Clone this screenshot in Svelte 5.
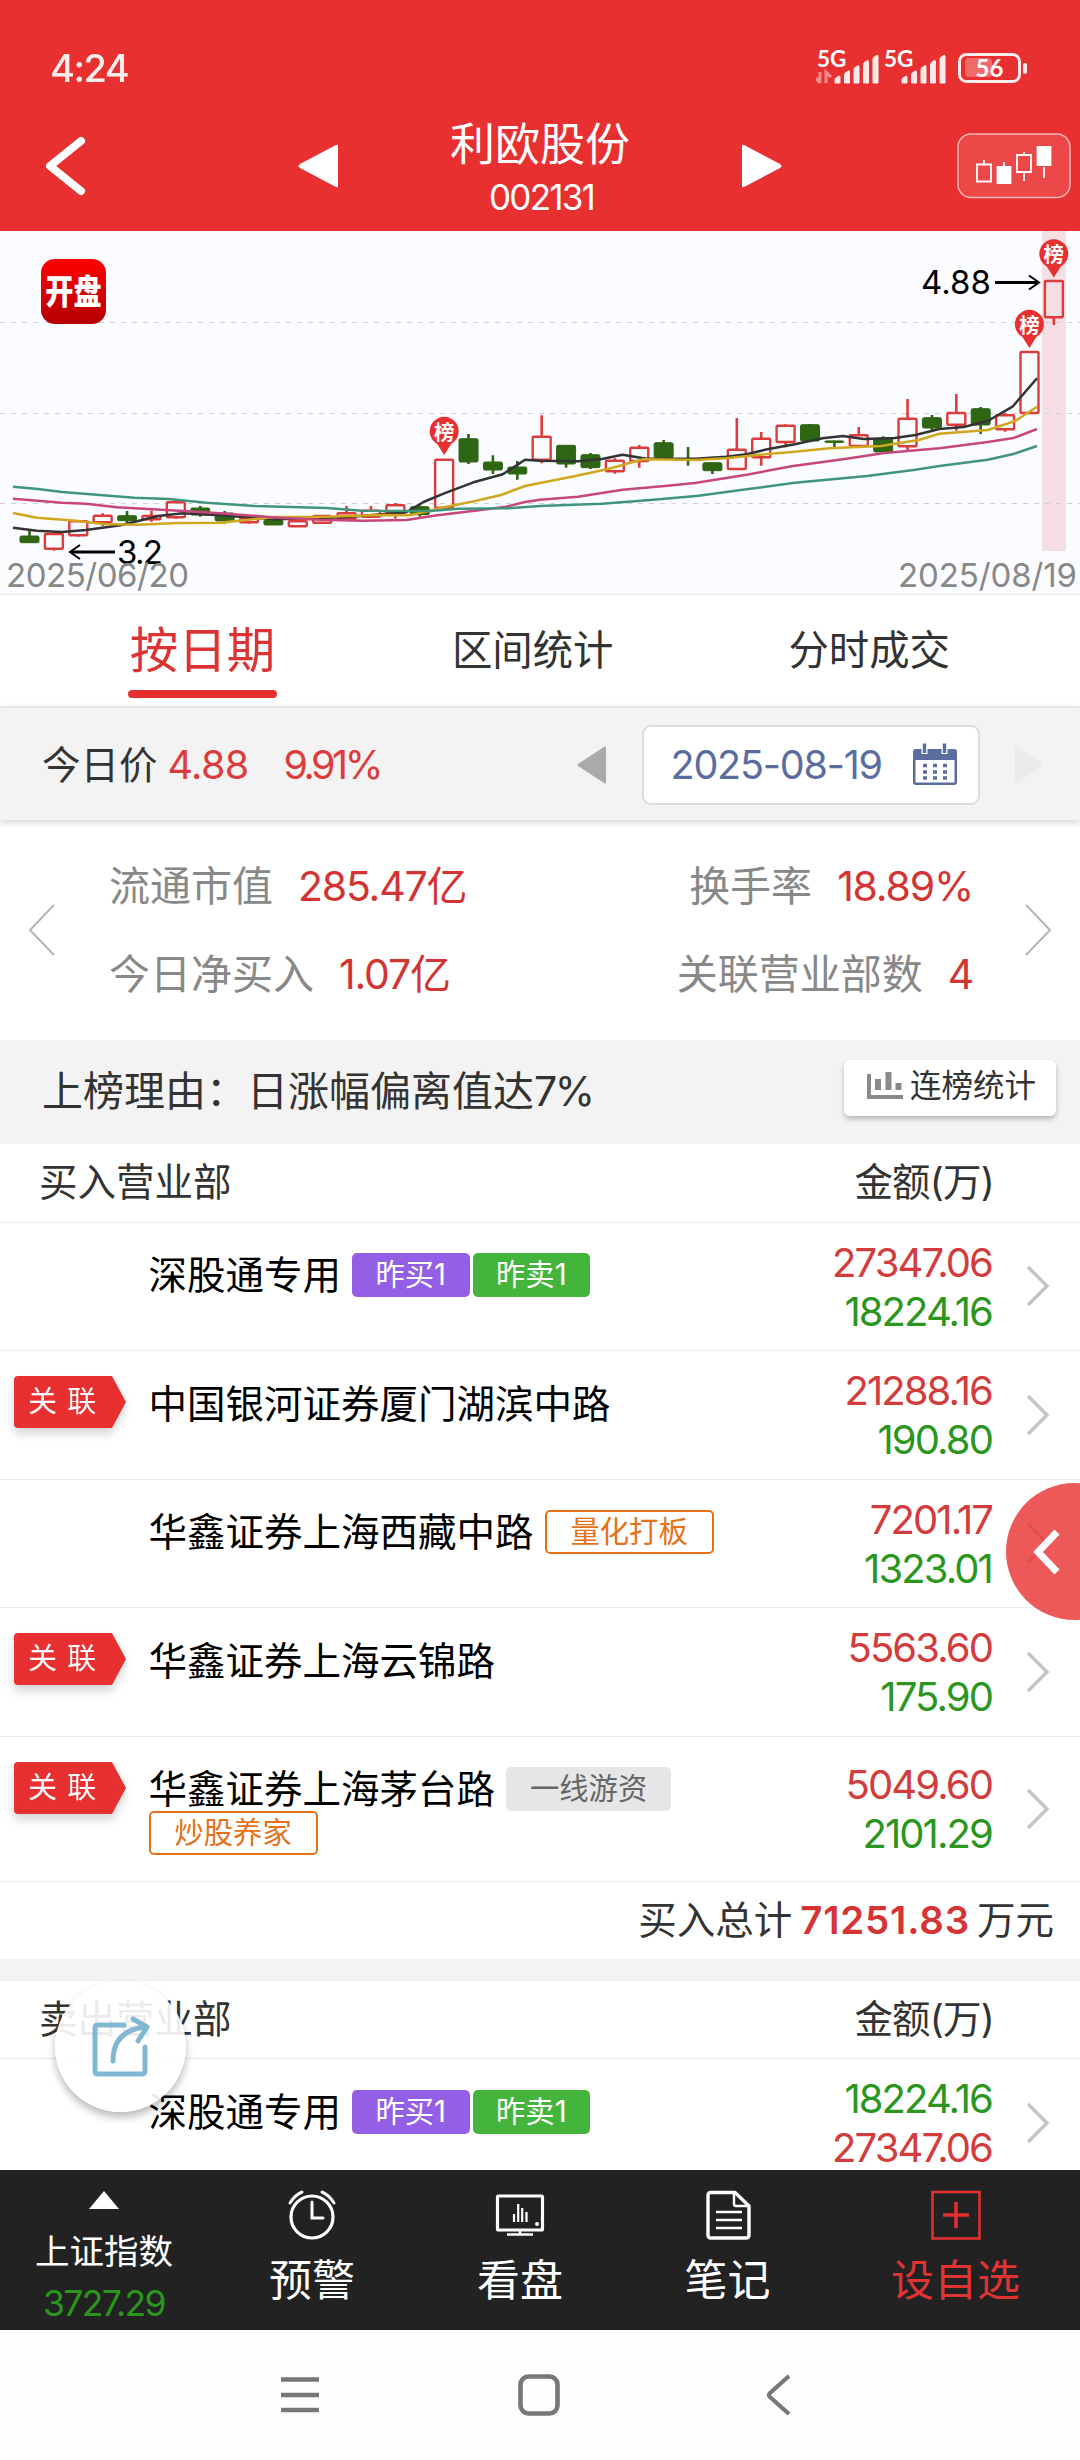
<script lang="ts">
	type Tag = { text: string; kind: string };
	type Seat = { name: string; linked?: boolean; tags?: Tag[]; amounts: [string, string]; sell?: boolean };

	const tabs = ['按日期', '区间统计', '分时成交'];
	let activeTab = $state(0);

	const yesterday: Tag[] = [
		{ text: '昨买1', kind: 'purple' },
		{ text: '昨卖1', kind: 'green' }
	];

	const buyers: Seat[] = [
		{ name: '深股通专用', tags: yesterday, amounts: ['27347.06', '18224.16'] },
		{ name: '中国银河证券厦门湖滨中路', linked: true, amounts: ['21288.16', '190.80'] },
		{ name: '华鑫证券上海西藏中路', tags: [{ text: '量化打板', kind: 'orange' }], amounts: ['7201.17', '1323.01'] },
		{ name: '华鑫证券上海云锦路', linked: true, amounts: ['5563.60', '175.90'] },
		{
			name: '华鑫证券上海茅台路',
			linked: true,
			tags: [{ text: '一线游资', kind: 'gray' }, { text: '炒股养家', kind: 'orange' }],
			amounts: ['5049.60', '2101.29']
		}
	];

	const sellers: Seat[] = [
		{ name: '深股通专用', tags: yesterday, amounts: ['18224.16', '27347.06'], sell: true }
	];

	// [up, bodyTop, bodyBottom, high, low]
	const candles = [
		[0, 305, 311.7, 299, 311.7], [1, 303, 317.7, 300.7, 319.7], [1, 290.3, 304.3, 289, 305.7],
		[1, 284.7, 291.3, 282.3, 295], [0, 284.7, 289.7, 280, 292.3], [1, 285, 288.3, 279.7, 290.7],
		[1, 271.3, 286.3, 269.3, 287.7], [0, 277, 284, 275, 285.7], [0, 282, 290, 280, 292.7],
		[1, 287.7, 291.3, 285.7, 292.7], [0, 288.7, 294, 288.7, 294], [1, 290.3, 295.3, 290.3, 295.3],
		[1, 285, 291.7, 285, 291.7], [1, 282.3, 288.3, 275, 288.3], [1, 279.7, 285.7, 275, 285.7],
		[1, 274.3, 282, 272, 287.7], [0, 275.7, 283.7, 274.3, 285.7], [1, 228.7, 276.7, 228.7, 276.7],
		[0, 207.7, 231, 203, 233], [0, 231, 239, 224.3, 243], [0, 236, 243, 230, 248.7],
		[1, 205.7, 228.7, 184.3, 232.3], [0, 214.3, 233, 214.3, 236.7], [0, 223.7, 236.7, 222, 238],
		[1, 229.7, 240.3, 227.3, 242.7], [1, 216.7, 230, 214, 236.7], [0, 211.7, 226.7, 209, 226.7],
		[0, 228, 229.5, 216, 234.7], [0, 231.7, 239.7, 231.7, 243], [1, 218.7, 238, 187, 238],
		[1, 207.7, 226.3, 201, 234.7], [1, 194.7, 211, 193.3, 216.3], [0, 193.7, 210, 193, 210],
		[0, 209.9, 211.4, 209.7, 217], [1, 204.3, 215, 196, 215], [0, 207.3, 221, 205.3, 221],
		[1, 187.7, 215.3, 168, 219], [0, 186.7, 197, 184, 199], [1, 182, 193.7, 163, 199.7],
		[0, 177.7, 194, 176, 203], [1, 184.3, 198.3, 182, 200.7], [1, 121, 182, 121, 182],
		[1, 50, 86.3, 50, 94]
	].map(([up, top, bottom, high, low], i) => ({ up, top, bottom, high, low, x: 29.5 + i * 24.39 }));

	const averages = [
		{ color: '#333', points: '13,296.7 37,299.7 62,301 86,299 120.5,294.3 158.4,285 182.5,282.3 220.4,284.3 275.5,288.3 344.4,286.3 406.3,281.3 423.5,271 444.2,262.3 473.5,251.3 502.8,243.3 525,228.7 540,229.7 577.9,230.3 602,228 622.6,223.7 646.7,227.7 695,227.7 726,225.7 746.6,223.3 767.3,218.3 794.8,213.3 822.4,207.3 843,205 863.7,208 894.7,207 915.4,204 939.4,198 963.6,196 987.7,190 1012.5,175.7 1037,147.3' },
		{ color: '#d0a820', points: '13,282 37,286.7 75.8,289.7 103.3,293 137.7,293.7 179,292 220.4,291.7 248,288.7 275.5,286 327,285.7 378.8,284 409.8,284.3 444.2,276.3 475.2,270 501,264 525,255 540,252 574.4,245.3 608.9,237.7 643.3,228.3 695,229 726,227.3 760.4,223.7 794.8,220.7 829.3,217.3 880.9,215 918.8,209 939.4,202.7 987.7,199 1015.2,190 1037,175.7' },
		{ color: '#c8467e', points: '13,267.7 62,271.7 86,272.7 117,276.3 179,279.7 220.4,282.3 279,286.7 320.2,288.7 361.6,289.7 406.3,289 437.3,284.3 478.7,279.3 506.2,275.7 525,271 540,268.7 577.9,265.7 622.6,258.7 667.4,254.7 695,252 746.6,243.7 791.4,235.3 843,228.3 884.4,222 939.4,217.3 987.7,211 1013.5,207 1037,198' },
		{ color: '#40957a', points: '13,255.7 38,258 62,261 134.3,266.7 168.7,268 206.6,271.7 254.8,275 327,277 361.6,279.7 430,280 458,277.7 506.2,277.3 540,275 602,272.7 653.6,268.7 698.4,264.7 746.6,258.3 794.8,251.7 867,245 915.4,238.7 939.4,235 987.7,228.7 1013.5,223 1037,215' }
	];

	const pins = [[444.2, 202], [1029.4, 95], [1053.8, 24.5]];
	const bars = [0, 1, 2, 3, 4];
</script>

{#snippet signal(data: boolean)}
	<svg class="signal" width="64" height="43" viewBox="0 -7 64 43">
		<text x="1" y="17" class="net">5G</text>
		{#if data}
			<path d="M4 22v11M4 33l-4-5M10 33V22l5 5" fill="none" stroke="#f58f8f" stroke-width="3" />
		{/if}
		{#each bars as i}
			<path d="M{19 + i * 9.5} 33v{-3 - i * 5.2}q0-1 1-2l3-2q1 0 1 1v{6 + i * 5.2}z" fill="#fff" stroke="#fff" opacity=".9" />
		{/each}
	</svg>
{/snippet}

{#snippet seatRow(seat: Seat)}
	<div class="seat">
		<div class="flag">
			{#if seat.linked}
				<div class="linked">
					<svg width="112" height="52" viewBox="0 0 112 52">
						<path d="M4 0H98L112 26L98 52H4Q0 52 0 48V4Q0 0 4 0Z" fill="#e83030" />
					</svg>
					<span>关 联</span>
				</div>
			{/if}
		</div>
		<div class="who">
			<span class="name">{seat.name}</span>
			{#each seat.tags ?? [] as tag}
				<span class="tag {tag.kind}">{tag.text}</span>
			{/each}
		</div>
		<div class="amounts" class:sell={seat.sell}>
			<span>{seat.amounts[0]}</span>
			<span>{seat.amounts[1]}</span>
		</div>
		<svg class="go" width="26" height="44" viewBox="0 0 26 44">
			<path d="M3 3L22 22L3 41" fill="none" stroke="#c4c4c4" stroke-width="3.4" />
		</svg>
	</div>
{/snippet}

<div class="screen">
	<header>
		<div class="status">
			<span class="time">4:24</span>
			<div class="status-icons">
				{@render signal(true)}
				{@render signal(false)}
				<svg class="battery" width="72" height="32" viewBox="0 0 72 32">
					<rect x="1.5" y="1.5" width="60" height="27" rx="7" fill="none" stroke="#fff" stroke-width="3" opacity=".9" />
					<rect x="7" y="5" width="27" height="19" rx="4" fill="#f06a6a" />
					<rect x="65" y="10" width="4" height="11" rx="2" fill="#fff" opacity=".9" />
					<text x="31.5" y="23.5" text-anchor="middle">56</text>
				</svg>
			</div>
		</div>
		<div class="titlebar">
			<svg class="back" width="44" height="62" viewBox="0 0 44 62">
				<path d="M37 6L6 31L37 56" fill="none" stroke="#fff" stroke-width="8" stroke-linecap="round" stroke-linejoin="round" />
			</svg>
			<div class="stock">
				<svg width="42" height="46" viewBox="0 0 42 46">
					<path d="M39 2Q41 1 41 3V43Q41 45 39 44L3 25Q0 23 3 21Z" fill="#fff" />
				</svg>
				<div class="stock-name">
					<h1>利欧股份</h1>
					<span>002131</span>
				</div>
				<svg width="42" height="46" viewBox="0 0 42 46">
					<path d="M3 2Q1 1 1 3V43Q1 45 3 44L39 25Q42 23 39 21Z" fill="#fff" />
				</svg>
			</div>
			<svg class="kline" width="114" height="66" viewBox="0 0 114 66">
				<rect x="1" y="1" width="112" height="63.5" rx="13" fill="#ed4848" stroke="#f8b4b4" stroke-width="1.5" />
				<g stroke="#fff" stroke-width="1.8" fill="none">
					<path d="M27 27v4M20 31.5h14v17H20zM47 29v4M67 19v3M60 22h14v17H60zM67 39v9M87 34v11" />
					<path d="M40.5 34h13v16h-13zM80.5 14h13v18h-13z" fill="#fff" />
				</g>
			</svg>
		</div>
	</header>

	<div class="chart">
		<svg width="1080" height="363" viewBox="0 0 1080 363">
			<defs>
				<linearGradient id="logo" x1="0" y1="0" x2="0" y2="1">
					<stop offset="0" stop-color="#ff0202" />
					<stop offset="1" stop-color="#b40000" />
				</linearGradient>
			</defs>
			<rect x="1042" width="24" height="320" fill="#f6dfe4" />
			{#each [91.5, 182.5, 272.5] as y}
				<path d="M0 {y}H1080" stroke="#cfcfd6" stroke-width="1" stroke-dasharray="5 6" />
			{/each}
			{#each candles as c}
				{#if c.up}
					<path d="M{c.x} {c.high}V{c.top}M{c.x} {c.bottom}V{c.low}" stroke="#dc3c3c" stroke-width="2.6" />
					<rect x={c.x - 9} y={c.top} width="18" height={c.bottom - c.top} rx="1" fill="none" stroke="#dc3c3c" stroke-width="2.4" />
				{:else}
					<path d="M{c.x} {c.high}V{c.low}" stroke="#2e6614" stroke-width="2.6" />
					<rect x={c.x - 9.5} y={c.top} width="19" height={c.bottom - c.top} rx="1.5" fill="#2e6614" stroke="#2e6614" stroke-width="1" />
				{/if}
			{/each}
			{#each averages as line}
				<polyline points={line.points} fill="none" stroke={line.color} stroke-width="2.5" stroke-linejoin="round" />
			{/each}
			{#each pins as [x, y]}
				<path d="M{x} {y + 22}L{x - 7} {y + 11}A14.5 14.5 0 1 1 {x + 7} {y + 11}Z" fill="#e83030" />
				<text {x} y={y + 6.5} class="pin">榜</text>
			{/each}
			<rect x="41" y="28" width="65" height="65" rx="14" fill="url(#logo)" />
			<text transform="translate(73.5 73) scale(.94 1.15)" class="logo">开盘</text>
			<g stroke="#000" fill="none">
				<path d="M72 321H115M995 51.5H1037" stroke-width="3" />
				<path d="M80 314L70 321L80 328M1029 44.5L1039 51.5L1029 58.5" stroke-width="2" />
			</g>
			<text x="117" y="333" class="mark" textLength="46">3.2</text>
			<text x="921" y="63" class="mark" textLength="70">4.88</text>
			<text x="6" y="355.5" class="day" textLength="183">2025/06/20</text>
			<text x="898" y="355.5" class="day" textLength="179">2025/08/19</text>
		</svg>
	</div>

	<nav class="tabs">
		{#each tabs as tab, i}
			<button class:active={activeTab === i} onclick={() => (activeTab = i)}>{tab}</button>
		{/each}
	</nav>

	<div class="datebar">
		<span class="today">今日价</span>
		<span class="price">4.88</span>
		<span class="change">9.91%</span>
		<svg class="prev" width="30" height="38" viewBox="0 0 30 38">
			<path d="M29 1V37Q29 38 27 37L1 20Q0 19 1 18L27 1Q29 0 29 1Z" fill="#aaa" />
		</svg>
		<div class="picker">
			<span>2025-08-19</span>
			<svg width="46" height="44" viewBox="0 0 46 44">
				<path d="M4 6H42Q45 6 45 9V39Q45 42 42 42H4Q1 42 1 39V9Q1 6 4 6Z" fill="#5a6d9e" />
				<rect x="3.5" y="17" width="39" height="22.5" fill="#fff" />
				<path d="M12.5 0V11M32.5 0V11" stroke="#fff" stroke-width="6" />
				<path d="M12.5 0.5V10M32.5 0.5V10" stroke="#5a6d9e" stroke-width="3.4" />
				<path d="M11 22.5H15M21 22.5H25M31 22.5H35M11 29H15M21 29H25M31 29H35M11 35H15M21 35H25M31 35H35" stroke="#5a6d9e" stroke-width="3.5" />
			</svg>
		</div>
		<svg class="next" width="30" height="38" viewBox="0 0 30 38">
			<path d="M1 1V37Q1 38 3 37L29 20Q30 19 29 18L3 1Q1 0 1 1Z" fill="#ebebeb" />
		</svg>
	</div>

	<div class="stats">
		<svg width="28" height="54" viewBox="0 0 28 54">
			<path d="M26 2L2 27L26 52" fill="none" stroke="#b5b5b5" stroke-width="2" />
		</svg>
		<div class="figures">
			<div><span>流通市值</span><strong>285.47亿</strong></div>
			<div class="end"><span>换手率</span><strong>18.89%</strong></div>
			<div><span>今日净买入</span><strong>1.07亿</strong></div>
			<div class="end"><span>关联营业部数</span><strong>4</strong></div>
		</div>
		<svg width="28" height="54" viewBox="0 0 28 54">
			<path d="M2 2L26 27L2 52" fill="none" stroke="#b5b5b5" stroke-width="2" />
		</svg>
	</div>

	<div class="reason">
		<span>上榜理由：日涨幅偏离值达<i>7%</i></span>
		<button>
			<svg width="36" height="27" viewBox="0 0 36 27">
				<path d="M2 2V25H36" fill="none" stroke="#8a8a8a" stroke-width="4" />
				<path d="M11 7V18M21.5 0V18M31.5 11V18" stroke="#8a8a8a" stroke-width="6" />
			</svg>
			连榜统计
		</button>
	</div>

	<section>
		<div class="head"><span>买入营业部</span><span class="unit">金额(万)</span></div>
		{#each buyers as seat}
			{@render seatRow(seat)}
		{/each}
		<div class="total">买入总计<b>71251.83</b>万元</div>
	</section>

	<section class="sells">
		<div class="head"><span>卖出营业部</span><span class="unit">金额(万)</span></div>
		{#each sellers as seat}
			{@render seatRow(seat)}
		{/each}
	</section>

	<div class="drawer">
		<svg width="30" height="46" viewBox="0 0 30 46">
			<path d="M25 3L6 23L25 43" fill="none" stroke="#fff" stroke-width="7" />
		</svg>
	</div>

	<div class="share">
		<svg width="60" height="64" viewBox="0 0 60 64">
			<g fill="none" stroke="#82b7d4" stroke-width="5" stroke-linecap="round" stroke-linejoin="round">
				<path d="M33 10H7Q4 10 4 13V56Q4 59 7 59H50Q54 59 54 56V32" />
				<path d="M22 46Q22 15 55 12M42 4L56 12L47 26" />
			</g>
		</svg>
	</div>

	<footer>
		<div class="index">
			<svg width="30" height="18" viewBox="0 0 30 18"><path d="M15 0L30 18H0Z" fill="#fff" /></svg>
			<span>上证指数</span>
			<em>3727.29</em>
		</div>
		<div class="item">
			<svg width="50" height="50" viewBox="0 0 50 50" fill="none" stroke="#fff" stroke-width="3.2" stroke-linecap="round">
				<circle cx="25" cy="27" r="21" />
				<path d="M25 12V28H36M3 13Q8 5 15 2M47 13Q42 5 35 2" stroke-width="3" />
			</svg>
			<span>预警</span>
		</div>
		<div class="item">
			<svg width="50" height="50" viewBox="0 0 50 50" fill="none" stroke="#fff" stroke-width="3.2">
				<rect x="2.5" y="6" width="45" height="34" rx="1" />
				<path d="M25 40V44M12 44.5H38" stroke-width="2.6" />
				<path d="M19 24V32M23.2 14V32M27.2 18V32M31.5 22V32" stroke-width="2.2" />
				<circle cx="42" cy="34" r="2" fill="#fff" stroke="none" />
			</svg>
			<span>看盘</span>
		</div>
		<div class="item">
			<svg width="50" height="50" viewBox="0 0 50 50" fill="none" stroke="#fff" stroke-width="3.4" stroke-linejoin="round">
				<path d="M32 2.5H8Q5 2.5 5 5.5V45Q5 48 8 48H43Q46 48 46 45V16Z" />
				<path d="M31 3V14Q31 16 33 16H45M13 22H39M13 30H39M13 38H39" stroke-width="2.4" />
			</svg>
			<span>笔记</span>
		</div>
		<div class="item red">
			<svg width="50" height="50" viewBox="0 0 50 50" fill="none" stroke="#e23030">
				<rect x="1.5" y="2" width="47" height="46.5" stroke-width="2.6" />
				<path d="M25 12V38M12 25H38" stroke-width="3.6" />
			</svg>
			<span>设自选</span>
		</div>
	</footer>

	<div class="system">
		<svg width="40" height="40" viewBox="0 0 40 40"><path d="M1 4.5H39M1 20H39M1 35H39" stroke="#777" stroke-width="4.6" /></svg>
		<svg class="home" width="42" height="42" viewBox="0 0 42 42"><rect x="2.5" y="2.5" width="37" height="37" rx="8" fill="none" stroke="#777" stroke-width="4.6" /></svg>
		<svg class="undo" width="28" height="44" viewBox="0 0 28 44"><path d="M25 3L6 20Q4 22 6 24L25 41" fill="none" stroke="#777" stroke-width="4.2" /></svg>
	</div>
</div>

<style>
	:global(body) {
		background: #fff;
	}

	.screen {
		position: relative;
		display: flex;
		flex-direction: column;
		width: 1080px;
		height: 2460px;
		overflow: hidden;
		background: #fff;
		color: #333;
		font-family: Inter, 'Noto Sans CJK SC', sans-serif;
		font-size: 38.5px;
		white-space: nowrap;
	}

	svg {
		display: block;
		flex: none;
	}

	button {
		border: none;
		padding: 0;
		background: none;
		font-family: inherit;
		color: inherit;
	}

	header {
		flex: none;
		height: 231px;
		background: #e83030;
		color: #fff;
	}

	.status {
		display: flex;
		justify-content: space-between;
		align-items: flex-start;
		height: 103px;
		padding: 43px 50px 0 50px;
		box-sizing: border-box;
	}

	.time {
		padding-top: 5px;
		font-size: 38px;
		font-weight: 500;
		line-height: 40px;
		letter-spacing: -1.5px;
		opacity: 0.92;
	}

	.status-icons {
		display: flex;
	}

	.signal {
		margin-right: 3px;
	}

	.net {
		fill: #fff;
		font-family: Lato, sans-serif;
		font-size: 22.5px;
		font-weight: 700;
	}

	.battery {
		margin: 10px 0 0 8px;
	}

	.battery text {
		fill: #fff;
		font-family: Lato, sans-serif;
		font-size: 24px;
		font-weight: 700;
	}

	.titlebar {
		display: flex;
		justify-content: space-between;
		align-items: center;
		padding: 0 9px 0 44px;
		height: 126px;
	}

	.stock {
		display: flex;
		align-items: center;
		justify-content: space-between;
		width: 487px;
		margin-left: 35px;
	}

	.stock-name {
		display: flex;
		flex-direction: column;
		align-items: center;
		padding-top: 6px;
	}

	h1 {
		margin: 0;
		font-size: 45px;
		font-weight: 400;
		line-height: 56px;
	}

	.stock-name span {
		margin-left: 3px;
		font-size: 35px;
		line-height: 48px;
		letter-spacing: -1.8px;
	}

	.chart {
		flex: none;
		height: 363px;
		border-bottom: 1px solid #e6e8ec;
		background: #fbfcff;
	}

	.pin {
		fill: #fff;
		font-size: 20.5px;
		font-weight: 700;
		text-anchor: middle;
	}

	.logo {
		fill: #fff;
		font-size: 30px;
		font-weight: 900;
		text-anchor: middle;
	}

	.mark,
	.day {
		font-size: 33px;
		fill: #000;
	}

	.day {
		fill: #888;
	}

	.tabs {
		flex: none;
		display: flex;
		justify-content: space-between;
		height: 111px;
		padding: 0 130px 0 128px;
	}

	.tabs button {
		font-size: 40.4px;
		line-height: 111px;
	}

	.tabs .active {
		position: relative;
		width: 149px;
		font-size: 48.5px;
		line-height: 112px;
		color: #dc3232;
	}

	.tabs .active::after {
		content: '';
		position: absolute;
		left: 0;
		bottom: 8px;
		width: 149px;
		height: 8px;
		border-radius: 4px;
		background: #e83030;
	}

	.datebar {
		position: relative;
		flex: none;
		display: flex;
		align-items: center;
		height: 114px;
		padding: 1px 0 0 42px;
		border-top: 2px solid #e8e8e8;
		background: #f3f3f3;
		box-shadow: 0 3px 7px rgba(0, 0, 0, 0.16);
		box-sizing: border-box;
		line-height: 52px;
	}

	.price {
		width: 116px;
		margin-left: 10px;
		font-size: 39.5px;
		letter-spacing: -0.6px;
		color: #dc3c3c;
	}

	.change {
		width: 293px;
		font-size: 39.5px;
		letter-spacing: -3.5px;
		color: #dc3c3c;
	}

	.picker {
		display: flex;
		align-items: center;
		justify-content: space-between;
		width: 338px;
		height: 80px;
		margin-left: 35px;
		padding: 0 20px 0 27px;
		border: 2px solid #dcdcdc;
		border-radius: 9px;
		background: #fff;
		color: #5a6d9e;
		font-size: 39.5px;
		letter-spacing: -1.2px;
		box-sizing: border-box;
	}

	.next {
		margin-left: 34px;
	}

	.stats {
		flex: none;
		display: flex;
		align-items: center;
		height: 220px;
		padding: 0 28px;
	}

	.figures {
		flex: 1;
		display: grid;
		grid-template-columns: auto auto;
		justify-content: space-between;
		padding: 0 51px 0 53px;
		font-size: 41px;
		line-height: 88px;
	}

	.figures span {
		color: #888;
	}

	.figures strong {
		margin-left: 25px;
		font-weight: 400;
		letter-spacing: -1.2px;
		color: #d23434;
	}

	.figures .end {
		text-align: right;
	}

	.reason {
		flex: none;
		display: flex;
		align-items: center;
		justify-content: space-between;
		height: 104px;
		padding: 0 24px 0 42px;
		background: #f3f3f3;
		font-size: 41px;
		line-height: 60px;
		box-sizing: border-box;
	}

	.reason span {
		margin-top: -3px;
	}

	.reason i {
		font-style: normal;
		letter-spacing: -2.5px;
	}

	.reason button {
		display: flex;
		align-items: center;
		gap: 7px;
		width: 212px;
		height: 56px;
		margin-top: -9px;
		padding: 0 0 4px 23px;
		border-radius: 6px;
		background: #fff;
		box-shadow: 0 3px 5px rgba(0, 0, 0, 0.25);
		font-size: 31.5px;
		line-height: 50px;
	}

	section {
		flex: none;
	}

	.head {
		display: flex;
		justify-content: space-between;
		height: 78.6px;
		padding: 0 86px 0 39px;
		border-bottom: 1.5px solid #ebebeb;
		box-sizing: border-box;
		line-height: 76px;
	}

	.unit {
		letter-spacing: -0.8px;
	}

	.seat {
		display: flex;
		align-items: center;
		min-height: 128.5px;
		border-bottom: 1.5px solid #ebebeb;
		box-sizing: border-box;
	}

	.flag {
		align-self: flex-start;
		flex: none;
		width: 134px;
		padding: 25px 0 0 14px;
	}

	.linked {
		display: grid;
		filter: drop-shadow(0 6px 5px rgba(0, 0, 0, 0.16));
	}

	.linked > * {
		grid-area: 1 / 1;
	}

	.linked span {
		padding-left: 14px;
		color: #fff;
		font-size: 29px;
		line-height: 52px;
		word-spacing: 2px;
	}

	.who {
		align-self: flex-start;
		display: flex;
		flex-wrap: wrap;
		flex: none;
		width: 660px;
		padding: 30.5px 0 25.5px 0.5px;
		color: #000;
		box-sizing: border-box;
	}

	.name {
		margin-right: 11px;
		line-height: 44px;
	}

	.tag {
		height: 44px;
		margin-right: 3px;
		padding: 0 24px;
		border-radius: 5px;
		box-sizing: border-box;
		font-size: 29.3px;
		line-height: 44px;
	}

	.purple,
	.green {
		padding: 0 23.5px;
		color: #fff;
	}

	.purple {
		background: #935fe6;
	}

	.green {
		background: #43b53c;
	}

	.gray {
		background: #e6e6e6;
		color: #666;
	}

	.orange {
		border: 2px solid #e57119;
		background: #fff;
		color: #e57119;
		line-height: 40px;
	}

	.amounts {
		display: flex;
		flex-direction: column;
		flex: none;
		width: 184px;
		margin-top: 1px;
		text-align: right;
		font-size: 40px;
		line-height: 49px;
		letter-spacing: -1.9px;
		color: #2a961e;
	}

	.amounts span:first-child,
	.amounts.sell span:last-child {
		color: #d23c3c;
	}

	.amounts.sell span:first-child {
		color: #2a961e;
	}

	.go {
		margin-left: 33px;
	}

	.total {
		height: 77px;
		padding-right: 26px;
		text-align: right;
		line-height: 77px;
	}

	.total b {
		margin: 0 7px 0 8px;
		font-weight: 600;
		letter-spacing: 0.8px;
		color: #d63434;
	}

	.sells {
		flex: 1;
		min-height: 0;
		border-top: 22px solid #f3f3f3;
		overflow: hidden;
	}

	.drawer {
		position: absolute;
		left: 1006px;
		top: 1483px;
		display: flex;
		align-items: center;
		width: 137px;
		height: 137px;
		padding-left: 26px;
		border-radius: 50%;
		background: rgba(232, 48, 48, 0.8);
		box-sizing: border-box;
	}

	.share {
		position: absolute;
		left: 55px;
		top: 1981px;
		display: flex;
		align-items: center;
		justify-content: center;
		width: 131px;
		height: 131px;
		border-radius: 50%;
		background: rgba(255, 255, 255, 0.9);
		box-shadow: 0 5px 9px rgba(0, 0, 0, 0.28);
	}

	footer {
		flex: none;
		display: grid;
		grid-template-columns: 208px 208px 208px 207px 249px;
		height: 160px;
		background: #222;
		color: #fff;
	}

	.index,
	.item {
		display: flex;
		flex-direction: column;
		align-items: center;
	}

	.index {
		font-size: 34.5px;
		padding-top: 21px;
	}

	.index span {
		margin-top: 15px;
		line-height: 56px;
	}

	.index em {
		font-style: normal;
		font-size: 35.5px;
		line-height: 48px;
		letter-spacing: -1.6px;
		color: #2a961e;
	}

	.item {
		padding-top: 20px;
		font-size: 43px;
	}

	.item span {
		line-height: 80px;
	}

	.item.red {
		color: #e03434;
	}

	.system {
		flex: none;
		display: flex;
		align-items: center;
		height: 130px;
		padding-left: 280px;
		background: #fefefe;
	}

	.home {
		margin-left: 198px;
	}

	.undo {
		margin-left: 204px;
	}
</style>
